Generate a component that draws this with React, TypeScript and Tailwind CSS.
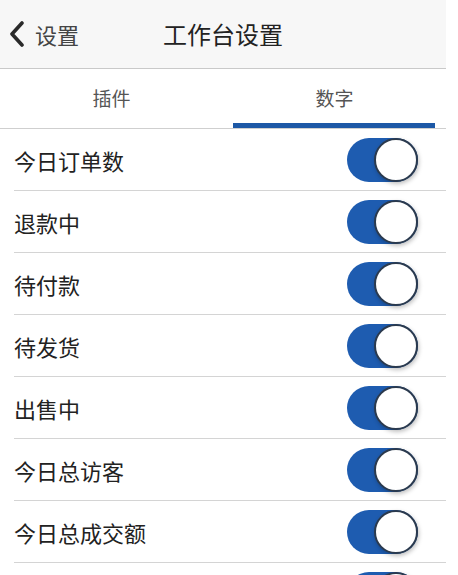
const items = ['今日订单数', '退款中', '待付款', '待发货', '出售中', '今日总访客', '今日总成交额'];

function Toggle() {
  return (
    <div className="relative h-[44px] w-[71px] rounded-full bg-[#1e5cb0]">
      <div className="absolute right-0 top-0 h-[44px] w-[44px] rounded-full border-2 border-[#2b3a4e] bg-white shadow-[1px_2px_4px_rgba(0,0,0,0.25)]" />
    </div>
  );
}

export default function App() {
  return (
    <div
      className="h-[575px] w-[458px] overflow-hidden bg-white"
      style={{ fontFamily: '"Noto Sans CJK SC", "Noto Sans", sans-serif' }}
    >
      <div className="w-[446px]">
        <header className="relative flex h-[69px] items-center border-b border-[#c9c9c9] bg-[#f7f7f7]">
          <div className="flex items-center pl-[8px]">
            <svg width="18" height="26" viewBox="0 0 18 26" aria-hidden="true">
              <path d="M14 2 4 13l10 11" fill="none" stroke="#2a2a2a" strokeWidth="3.6" strokeLinecap="round" strokeLinejoin="round" />
            </svg>
            <span className="ml-[9px] text-[22px] leading-none text-[#444]">设置</span>
          </div>
          <h1 className="pointer-events-none absolute inset-x-0 text-center text-[24px] leading-none text-[#222]">
            工作台设置
          </h1>
        </header>

        <nav className="flex h-[60px] border-b border-[#cfcfcf]">
          <div className="flex flex-1 items-center justify-center text-[19px] text-[#555]">插件</div>
          <div className="relative flex flex-1 items-center justify-center text-[19px] text-[#555]">
            数字
            <span className="absolute bottom-0 left-[10px] right-[11px] h-[5px] bg-[#1d58a6]" />
          </div>
        </nav>

        <ul className="pl-[14px]">
          {items.map((label) => (
            <li key={label} className="flex h-[62px] items-center justify-between border-b border-[#d4d4d4] pr-[28px]">
              <span className="text-[22px] leading-none text-[#222]">{label}</span>
              <Toggle />
            </li>
          ))}
          <li className="flex h-[62px] items-center justify-end pr-[28px]">
            <Toggle />
          </li>
        </ul>
      </div>
    </div>
  );
}
